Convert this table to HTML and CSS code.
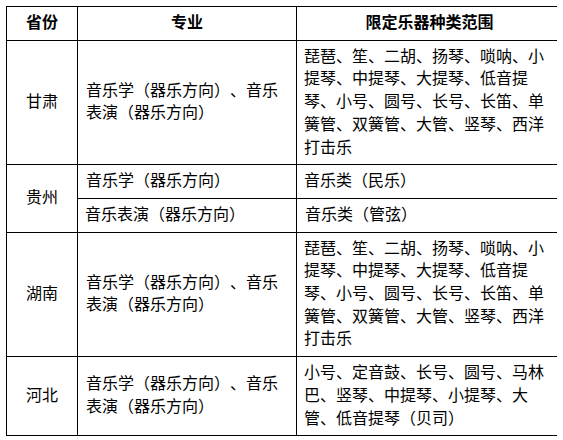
FILE: index.html
```html
<!DOCTYPE html>
<html lang="zh-CN">
<head>
<meta charset="utf-8">
<title>限定乐器种类范围</title>
<link rel="stylesheet" href="styles.css">
</head>
<body>
<table class="scope">
  <colgroup>
    <col class="c-prov">
    <col class="c-major">
    <col class="c-inst">
  </colgroup>
  <thead>
    <tr>
      <th>省份</th>
      <th>专业</th>
      <th>限定乐器种类范围</th>
    </tr>
  </thead>
  <tbody>
    <tr>
      <td class="prov">甘肃</td>
      <td>音乐学（器乐方向）、音乐表演（器乐方向）</td>
      <td>琵琶、笙、二胡、扬琴、唢呐、小提琴、中提琴、大提琴、低音提琴、小号、圆号、长号、长笛、单簧管、双簧管、大管、竖琴、西洋打击乐</td>
    </tr>
    <tr>
      <td class="prov" rowspan="2">贵州</td>
      <td>音乐学（器乐方向）</td>
      <td>音乐类（民乐）</td>
    </tr>
    <tr>
      <td>音乐表演（器乐方向）</td>
      <td>音乐类（管弦）</td>
    </tr>
    <tr>
      <td class="prov">湖南</td>
      <td>音乐学（器乐方向）、音乐表演（器乐方向）</td>
      <td>琵琶、笙、二胡、扬琴、唢呐、小提琴、中提琴、大提琴、低音提琴、小号、圆号、长号、长笛、单簧管、双簧管、大管、竖琴、西洋打击乐</td>
    </tr>
    <tr>
      <td class="prov">河北</td>
      <td>音乐学（器乐方向）、音乐表演（器乐方向）</td>
      <td>小号、定音鼓、长号、圆号、马林巴、竖琴、中提琴、小提琴、大管、低音提琴（贝司）</td>
    </tr>
  </tbody>
</table>
</body>
</html>
```
FILE: styles.css
```css
html, body {
  background: #ffffff;
}
body {
  margin: 6px;
  font-family: "Noto Sans CJK SC", "Noto Sans", sans-serif;
  font-size: 16px;
  color: #000000;
}
.scope {
  border-collapse: collapse;
  table-layout: fixed;
  width: 556px;
  text-spacing-trim: space-all;
}
.c-prov { width: 71px; }
.c-major { width: 219px; }
.c-inst { width: 266px; }
.scope th,
.scope td {
  border: 1px solid #000000;
  padding: 3px 7px 7px 7px;
  line-height: 22.7px;
  vertical-align: middle;
  text-align: left;
  font-weight: normal;
  word-break: normal;
  line-break: strict;
}
.scope td:nth-child(2) {
  padding-left: 8px;
}
.scope th {
  font-weight: bold;
  text-align: center;
}
.scope td.prov {
  text-align: center;
  padding-left: 2px;
  padding-right: 2px;
}
```
